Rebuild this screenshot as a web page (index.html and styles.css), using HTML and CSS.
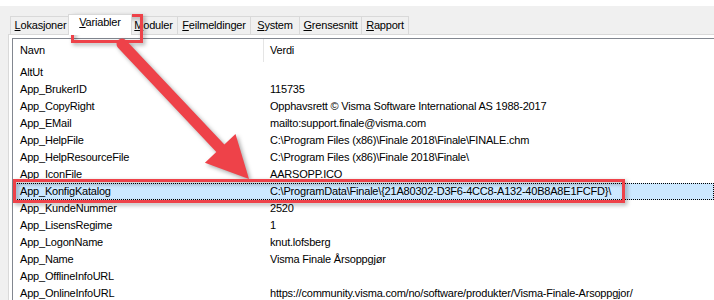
FILE: index.html
```html
<!DOCTYPE html>
<html lang="no">
<head>
<meta charset="utf-8">
<title>Variabler</title>
<link rel="stylesheet" href="styles.css">
</head>
<body>
<div class="window">
  <div class="tabcontrol">
    <div class="tabstrip">
      <div class="tab tab-lok"><u>L</u>okasjoner</div>
      <div class="tab tab-var active"><u>V</u>ariabler</div>
      <div class="tab tab-mod"><u>M</u>oduler</div>
      <div class="tab tab-feil"><u>F</u>eilmeldinger</div>
      <div class="tab tab-sys"><u>S</u>ystem</div>
      <div class="tab tab-gren"><u>G</u>rensesnitt</div>
      <div class="tab tab-rap"><u>R</u>apport</div>
    </div>
    <div class="tabpage">
      <div class="listview">
        <div class="lv-header">
          <div class="hcol hcol-name">Navn</div>
          <div class="hcol hcol-value">Verdi</div>
        </div>
        <div class="lv-row"><span class="cell">AltUt</span><span class="cell"></span></div>
        <div class="lv-row"><span class="cell">App_BrukerID</span><span class="cell">115735</span></div>
        <div class="lv-row"><span class="cell">App_CopyRight</span><span class="cell">Opphavsrett © Visma Software International AS 1988-2017</span></div>
        <div class="lv-row"><span class="cell">App_EMail</span><span class="cell">mailto:support.finale@visma.com</span></div>
        <div class="lv-row"><span class="cell">App_HelpFile</span><span class="cell">C:\Program Files (x86)\Finale 2018\Finale\FINALE.chm</span></div>
        <div class="lv-row"><span class="cell">App_HelpResourceFile</span><span class="cell">C:\Program Files (x86)\Finale 2018\Finale\</span></div>
        <div class="lv-row"><span class="cell">App_IconFile</span><span class="cell">AARSOPP.ICO</span></div>
        <div class="lv-row selected"><span class="cell">App_KonfigKatalog</span><span class="cell">C:\ProgramData\Finale\{21A80302-D3F6-4CC8-A132-40B8A8E1FCFD}\</span></div>
        <div class="lv-row"><span class="cell">App_KundeNummer</span><span class="cell">2520</span></div>
        <div class="lv-row"><span class="cell">App_LisensRegime</span><span class="cell">1</span></div>
        <div class="lv-row"><span class="cell">App_LogonName</span><span class="cell">knut.lofsberg</span></div>
        <div class="lv-row"><span class="cell">App_Name</span><span class="cell">Visma Finale Årsoppgjør</span></div>
        <div class="lv-row"><span class="cell">App_OfflineInfoURL</span><span class="cell"></span></div>
        <div class="lv-row"><span class="cell">App_OnlineInfoURL</span><span class="cell">https://community.visma.com/no/software/produkter/Visma-Finale-Arsoppgjor/</span></div>
      </div>
    </div>
  </div>
  <svg class="annotations" width="714" height="300" viewBox="0 0 714 300" aria-hidden="true">
    <g class="marks">
      <rect x="72.5" y="15.5" width="69" height="26" fill="none" stroke="#ee4249" stroke-width="3"/>
      <rect x="14.5" y="180.5" width="609" height="21" fill="none" stroke="#ee4249" stroke-width="3"/>
      <line x1="122" y1="44" x2="222" y2="150" stroke="#ee4249" stroke-width="11" stroke-linecap="round"/>
      <polygon points="249,179 235.5,134 204.9,162.8" fill="#ee4249"/>
    </g>
  </svg>
</div>
</body>
</html>
```

FILE: styles.css
```css
html, body {
  margin: 0;
  padding: 0;
}

body {
  width: 714px;
  height: 300px;
  overflow: hidden;
  background: #ffffff;
  font-family: "Liberation Sans", Arial, sans-serif;
  font-size: 11px;
  letter-spacing: -0.2px;
  color: #000000;
}

.window {
  position: relative;
  height: 300px;
  margin-top: 6px;
  background: #f0f0f0;
}

.tabcontrol {
  margin-left: 8px;
  display: flex;
  flex-direction: column;
  height: 294px;
}

.tabstrip {
  display: flex;
  align-items: flex-end;
  height: 28px;
  padding-left: 2px;
}

.tab {
  box-sizing: border-box;
  height: 18px;
  border: 1px solid #d9d9d9;
  border-bottom: none;
  margin-left: -1px;
  background: #f0f0f0;
  line-height: 17px;
  text-align: center;
  white-space: nowrap;
}

.tab:first-child {
  margin-left: 0;
}

.tab u {
  text-decoration-thickness: 1px;
  text-underline-offset: 1px;
}

.tab-lok { width: 61px; }
.tab-var { width: 60px; }
.tab-mod { width: 49px; }
.tab-feil { width: 74px; }
.tab-sys { width: 50px; }
.tab-gren { width: 63px; }
.tab-rap { width: 48px; }

.tab.active {
  position: relative;
  z-index: 1;
  width: 64px;
  height: 21px;
  margin: 0 -2px -1px -3px;
  background: #ffffff;
  line-height: 15px;
}

.tabpage {
  flex: 1;
  border-top: 1px solid #d9d9d9;
  border-left: 1px solid #d9d9d9;
  background: #ffffff;
  padding: 3px 0 0 3px;
  overflow: hidden;
}

.listview {
  border-top: 1px solid #828790;
  border-left: 1px solid #828790;
  background: #ffffff;
  height: 100%;
}

.lv-header {
  display: grid;
  grid-template-columns: 251px 1fr;
  height: 25px;
}

.hcol {
  line-height: 23px;
  padding-left: 7px;
  white-space: nowrap;
}

.hcol-name {
  border-right: 1px solid #e5e5e5;
  margin-bottom: 3px;
}

.hcol-value {
  padding-left: 6px;
}

.lv-row {
  display: grid;
  grid-template-columns: 251px 1fr;
  height: 17px;
  line-height: 17px;
  box-sizing: border-box;
}

.cell {
  padding-left: 7px;
  white-space: nowrap;
}

.cell + .cell {
  padding-left: 6px;
}

.lv-row.selected {
  background: #cce8ff;
  outline: 1px dotted #000000;
  outline-offset: -1px;
}

.annotations {
  position: absolute;
  left: 0;
  top: -6px;
  pointer-events: none;
}

.marks {
  filter: drop-shadow(2px 2px 2px rgba(0, 0, 0, 0.35));
}
```
